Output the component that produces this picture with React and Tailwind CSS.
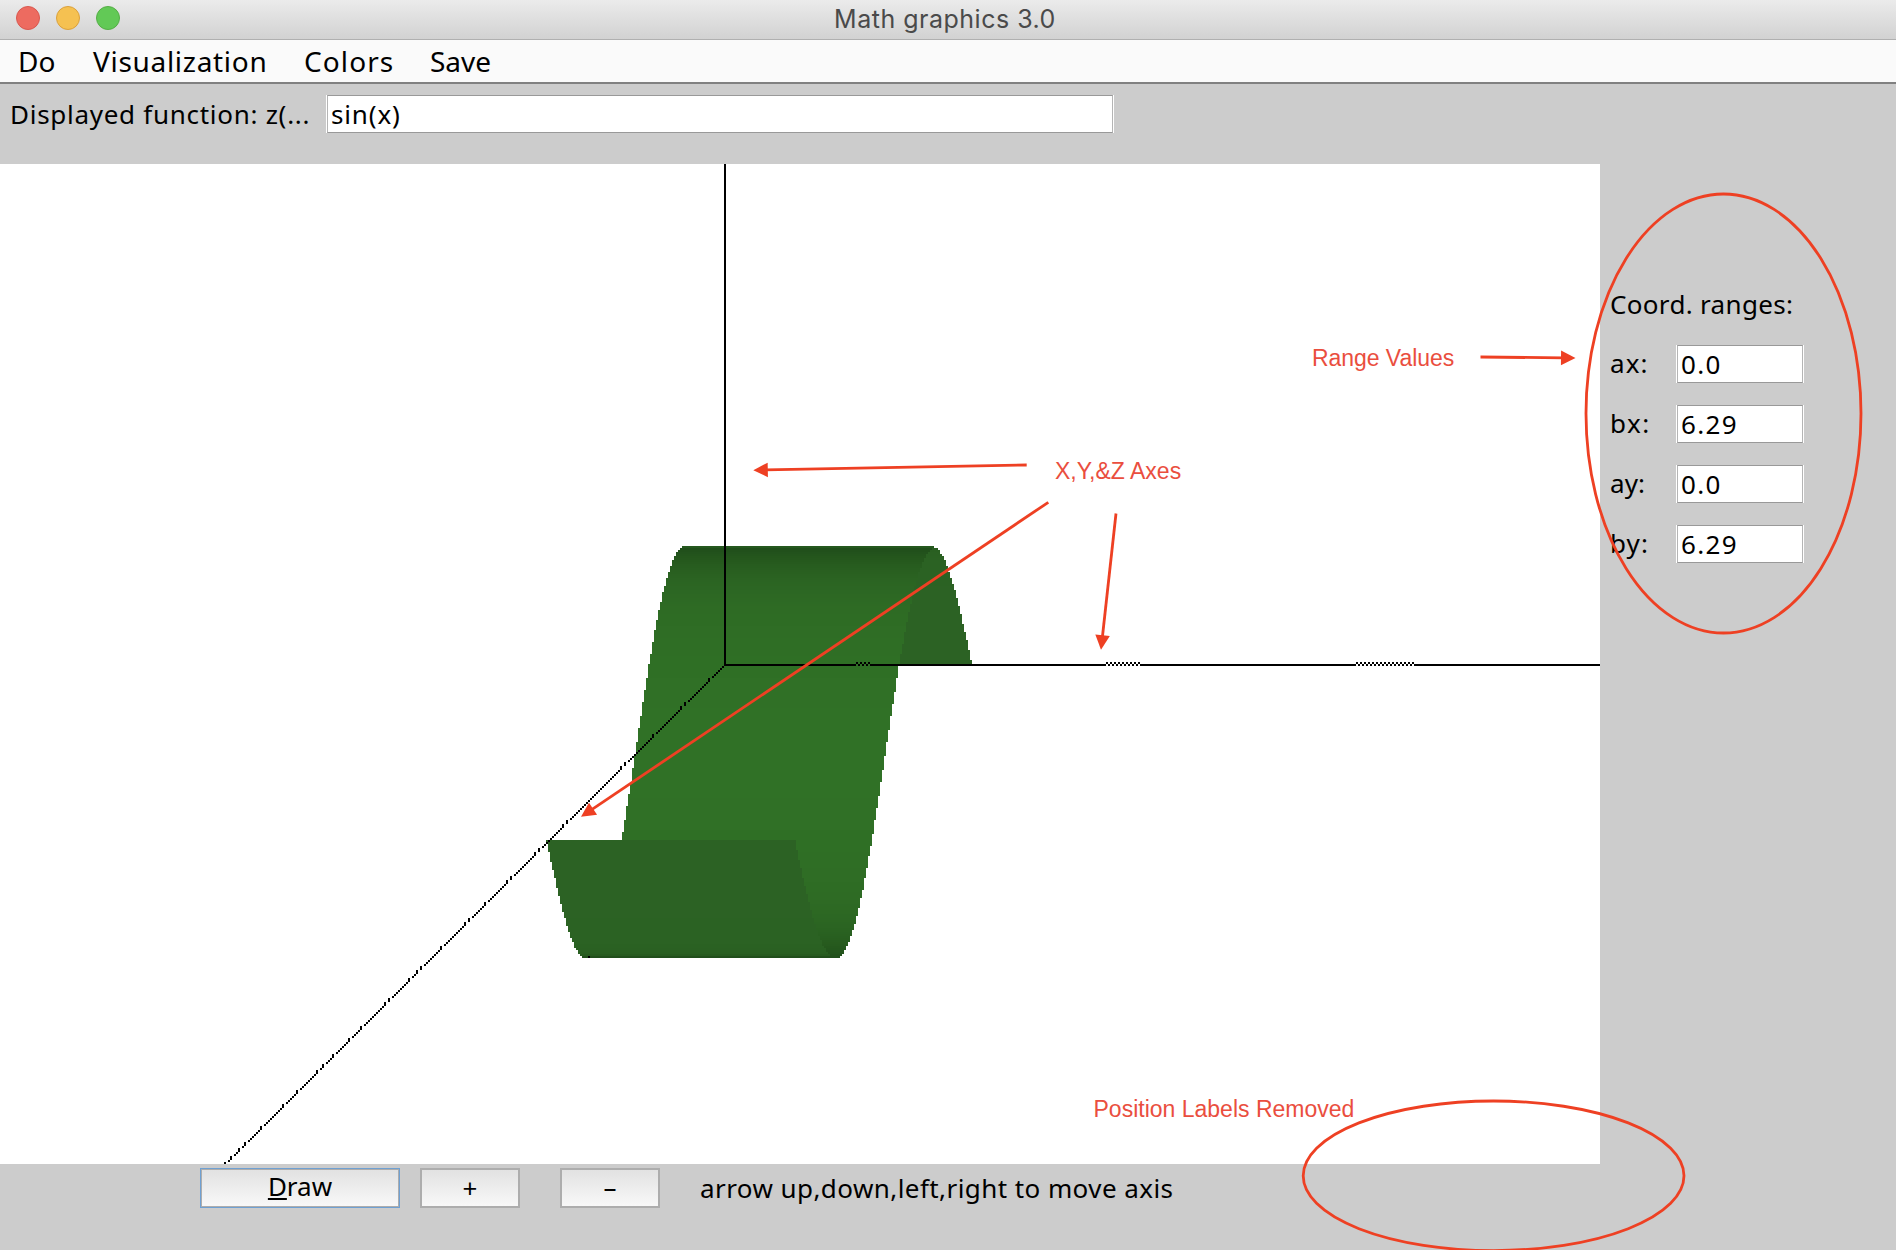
import React from "react";

const CELL = 2;
const snap = (v) => Math.floor(v / CELL) * CELL;

// Canvas coordinates: the origin of the axes inside the 1600x1000 drawing area.
const ORIGIN = { x: 725, y: 500.4 };
const DEPTH_X = 28.2;
const DEPTH_Y = 28.1;
const AMPLITUDE = 158.4;
const SPAN_FRONT = 250;
const SPAN_BACK = 248;
const MAX_X = 6.29;

const FRONT_STOPS = [
  [-0.2, 32, 74, 25],
  [0.0, 33, 80, 27],
  [0.2, 37, 88, 29],
  [0.45, 43, 100, 34],
  [0.65, 46, 107, 36],
  [1, 48, 113, 38],
];
const BACK_STOPS = [
  [0, 33, 78, 27],
  [0.2, 36, 86, 29],
  [0.4, 41, 95, 33],
  [0.6, 43, 98, 35],
  [1, 44, 98, 36],
];

function mix(stops, t) {
  for (let i = 1; i < stops.length; i++) {
    const a = stops[i - 1];
    const b = stops[i];
    if (t <= b[0] || i === stops.length - 1) {
      const k = Math.max(0, Math.min(1, (t - a[0]) / (b[0] - a[0])));
      return `rgb(${[1, 2, 3].map((n) => Math.round(a[n] + (b[n] - a[n]) * k)).join(",")})`;
    }
  }
}

// z = sin(x) as horizontal runs, ordered from the farthest to the nearest.
function surfaceRuns() {
  const runs = [];
  let run = null;
  for (let x = 0; x <= MAX_X; x += 0.004) {
    const y = snap(ORIGIN.y + DEPTH_Y * x - AMPLITUDE * Math.sin(x));
    const left = snap(ORIGIN.x - DEPTH_X * x);
    if (!run || run.y !== y) {
      const slope = Math.cos(x);
      const facing = x > 1.395 && x < 4.888;
      run = {
        y,
        left,
        right: left + (facing ? SPAN_FRONT : SPAN_BACK),
        fill: facing ? mix(FRONT_STOPS, -slope) : mix(BACK_STOPS, slope),
      };
      runs.push(run);
    }
    run.left = Math.min(run.left, left);
  }
  return runs;
}

const DIAGONAL_STEPS = new Set([
  6, 18, 20, 34, 48, 50, 77, 79, 91, 93, 105, 107, 118, 126, 128, 140, 150, 152, 156, 166, 168, 180,
  186, 194, 199, 202, 212, 219, 230, 238, 241, 245, 248,
]);
const DITHERS = [
  [856, 870],
  [1106, 1140],
  [1356, 1414],
];

function Plot() {
  const diagonal = Array.from({ length: 249 }, (_, j) => ({
    x: 722 - CELL * (DIAGONAL_STEPS.has(j) ? j + 1 : j),
    y: 502 + CELL * j,
  }));
  const solid = [
    [724, 856],
    [870, 1106],
    [1140, 1356],
    [1414, 1600],
  ];
  return (
    <svg width="1600" height="1000" viewBox="0 0 1600 1000" shapeRendering="crispEdges" className="block bg-white">
      {surfaceRuns().map((r, i) => (
        <rect key={i} x={r.left} y={r.y} width={r.right - r.left} height={CELL} fill={r.fill} />
      ))}
      <rect x="588" y="792" width="2" height="2" />
      <rect x="724" y="0" width="2" height="502" />
      {solid.map(([a, b]) => (
        <rect key={a} x={a} y="500" width={b - a} height="2" />
      ))}
      {DITHERS.map(([a, b]) =>
        Array.from({ length: (b - a) / 2 }, (_, i) => (
          <rect key={`${a}-${i}`} x={a + i * 2} y={i % 2 ? 500 : 498} width="2" height="2" />
        ))
      )}
      {diagonal.map((p) => (
        <rect key={p.y} x={p.x} y={p.y} width="2" height="2" />
      ))}
    </svg>
  );
}

function Arrow({ from, to }) {
  const dx = to[0] - from[0];
  const dy = to[1] - from[1];
  const len = Math.hypot(dx, dy);
  const angle = (Math.atan2(dy, dx) * 180) / Math.PI;
  return (
    <g transform={`translate(${from[0]} ${from[1]}) rotate(${angle})`}>
      <path d={`M0 0H${len - 12}`} stroke="#ee4023" strokeWidth="2.8" />
      <path d={`M${len} 0l-14.5 -7.3v14.6z`} fill="#ee4023" />
    </g>
  );
}

function Annotations() {
  return (
    <div className="pointer-events-none absolute inset-0 overflow-hidden font-['Liberation_Sans',Arial,sans-serif] text-[23px] leading-[26px] whitespace-nowrap text-[#ea4e3e]">
      <svg width="1896" height="1250" viewBox="0 0 1896 1250" className="absolute inset-0">
        <g fill="none" stroke="#ee4023" strokeWidth="2.8">
          <ellipse cx="1723.5" cy="413.5" rx="137.5" ry="219.5" />
          <ellipse cx="1493.6" cy="1175.8" rx="190.4" ry="74.8" />
        </g>
        <Arrow from={[1480.5, 357]} to={[1575.5, 358]} />
        <Arrow from={[1026.7, 465]} to={[753.3, 470.2]} />
        <Arrow from={[1048.3, 502.3]} to={[581, 816.8]} />
        <Arrow from={[1116, 513.5]} to={[1101, 649.7]} />
      </svg>
      <span className="absolute top-[345px] left-[1312px] tracking-[-0.05px]">Range Values</span>
      <span className="absolute top-[458px] left-[1055px]">X,Y,&amp;Z Axes</span>
      <span className="absolute top-[1096px] left-[1093.5px]">Position Labels Removed</span>
    </div>
  );
}

function Field({ value, className }) {
  return (
    <div className={`h-[38px] border-x border-white ${className}`}>
      <div className="h-full border border-[#999999] border-x-[#b5b5b5] bg-white pl-[3px] leading-[36px] whitespace-nowrap">
        {value}
      </div>
    </div>
  );
}

const RANGES = [
  { label: "ax:", value: "0.0", spacing: "tracking-[1.1px]" },
  { label: "bx:", value: "6.29", spacing: "tracking-[1.5px]" },
  { label: "ay:", value: "0.0", spacing: "tracking-[0.1px]" },
  { label: "by:", value: "6.29", spacing: "tracking-[1.1px]" },
];

export default function App() {
  return (
    <div className="relative flex h-[1250px] w-[1896px] flex-col overflow-hidden bg-[#cccccc] font-['Noto_Sans','Open_Sans',sans-serif] text-[26px] text-black">
      <header className="relative h-10 shrink-0 border-b border-[#b0b0b0] bg-linear-to-b from-[#ebebeb] to-[#d2d2d2]">
        <div className="flex gap-4 pt-1.5 pl-4">
          <span className="size-6 rounded-full border border-[#d9584f] bg-[#ed6b60]" />
          <span className="size-6 rounded-full border border-[#dba13c] bg-[#f5c151]" />
          <span className="size-6 rounded-full border border-[#55ae46] bg-[#62c956]" />
        </div>
        <h1 className="absolute inset-x-0 top-0 pr-[6px] text-center font-['Inter',sans-serif] text-[25px] leading-[38px] tracking-[0.5px] text-[#4a4a4a]">
          Math graphics 3.0
        </h1>
      </header>

      <nav className="flex h-11 shrink-0 items-center border-b-2 border-[#808080] bg-[#fafafa] pl-[18px] text-[28px]">
        <span className="w-[75px]">Do</span>
        <span className="w-[211px] tracking-[0.7px]">Visualization</span>
        <span className="w-[126px] tracking-[1.1px]">Colors</span>
        <span>Save</span>
      </nav>

      <section className="flex h-20 shrink-0 items-start pt-[11px] pl-[10px]">
        <span className="w-[316px] leading-[38px] tracking-[0.72px] whitespace-nowrap">Displayed function: z(...</span>
        <Field value="sin(x)" className="w-[788px] tracking-[0.84px]" />
      </section>

      <main className="flex h-[1000px] shrink-0">
        <Plot />
        <aside className="flex flex-1 flex-col pt-[120px] pl-[10px]">
          <h2 className="h-[61px] leading-[40px] tracking-[0.32px]">Coord. ranges:</h2>
          <div className="flex flex-col gap-[22px]">
            {RANGES.map((r) => (
              <div key={r.label} className="flex h-[38px]">
                <span className={`w-[66px] leading-[37px] ${r.spacing}`}>{r.label}</span>
                <Field value={r.value} className="w-32 tracking-[1.35px]" />
              </div>
            ))}
          </div>
        </aside>
      </main>

      <footer className="flex flex-1 items-start pt-1 pl-[200px]">
        <button className="h-10 w-[200px] border border-[#6fa0d2] p-0">
          <span className="flex h-full items-center justify-center border border-[#adadad] bg-linear-to-b from-[#e2e2e2] to-[#f8f8f8] pb-1">
            <span className="underline decoration-2 underline-offset-[2px]">D</span>raw
          </span>
        </button>
        <button className="ml-5 h-10 w-[100px] border-2 border-[#adadad] bg-linear-to-b from-[#e2e2e2] to-[#f8f8f8]">
          <span className="block leading-[36px]">+</span>
        </button>
        <button className="ml-10 h-10 w-[100px] border-2 border-[#adadad] bg-linear-to-b from-[#e2e2e2] to-[#f8f8f8]">
          <span className="block pb-0.5 leading-[34px]">–</span>
        </button>
        <span className="ml-10 leading-[40px] tracking-[0.43px]">arrow up,down,left,right to move axis</span>
      </footer>

      <Annotations />
    </div>
  );
}
